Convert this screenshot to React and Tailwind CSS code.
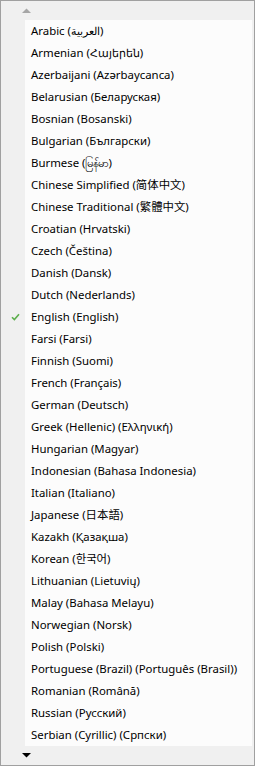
import React from "react";

const items = [
  "Arabic (العربية)",
  "Armenian (Հայերեն)",
  "Azerbaijani (Azərbaycanca)",
  "Belarusian (Беларуская)",
  "Bosnian (Bosanski)",
  "Bulgarian (Български)",
  "Burmese (မြန်မာ)",
  "Chinese Simplified (简体中文)",
  "Chinese Traditional (繁體中文)",
  "Croatian (Hrvatski)",
  "Czech (Čeština)",
  "Danish (Dansk)",
  "Dutch (Nederlands)",
  "English (English)",
  "Farsi (Farsi)",
  "Finnish (Suomi)",
  "French (Français)",
  "German (Deutsch)",
  "Greek (Hellenic) (Ελληνική)",
  "Hungarian (Magyar)",
  "Indonesian (Bahasa Indonesia)",
  "Italian (Italiano)",
  "Japanese (日本語)",
  "Kazakh (Қазақша)",
  "Korean (한국어)",
  "Lithuanian (Lietuvių)",
  "Malay (Bahasa Melayu)",
  "Norwegian (Norsk)",
  "Polish (Polski)",
  "Portuguese (Brazil) (Português (Brasil))",
  "Romanian (Română)",
  "Russian (Русский)",
  "Serbian (Cyrillic) (Српски)",
];

export default function App() {
  return (
    <div
      className="w-[255px] h-[766px] border border-[#a0a0a0] bg-[#f0f0f0] flex flex-col overflow-hidden"
      style={{ fontFamily: '"Noto Sans", "Noto Sans CJK SC", sans-serif' }}
    >
      <div className="h-[19px] shrink-0 flex items-center pl-[21px]">
        <svg width="9" height="5" viewBox="0 0 9 5">
          <path d="M0 5 L4.5 0.5 L9 5 Z" fill="#a6a6a6" />
        </svg>
      </div>
      <div className="flex-1 flex flex-col pr-[2px]">
        {items.map((t) => (
          <div key={t} className="h-[22px] flex shrink-0">
            <div className="w-[24px] shrink-0 flex items-center justify-center pl-[4px]">
              {t === "English (English)" && (
                <svg width="9" height="8" viewBox="0 0 9 8">
                  <path d="M1 4.2 L3.4 6.6 L8 1.2" fill="none" stroke="#5cae4c" strokeWidth="1.6" />
                </svg>
              )}
            </div>
            <div className="flex-1 bg-[#fcfcfc] flex items-center pl-[6px] text-[11.4px] text-black whitespace-nowrap overflow-hidden leading-none">
              {t}
            </div>
          </div>
        ))}
      </div>
      <div className="h-[19px] shrink-0 flex items-center pl-[21px]">
        <svg width="9" height="5" viewBox="0 0 9 5">
          <path d="M0 0 L9 0 L4.5 4.5 Z" fill="#000" />
        </svg>
      </div>
    </div>
  );
}
